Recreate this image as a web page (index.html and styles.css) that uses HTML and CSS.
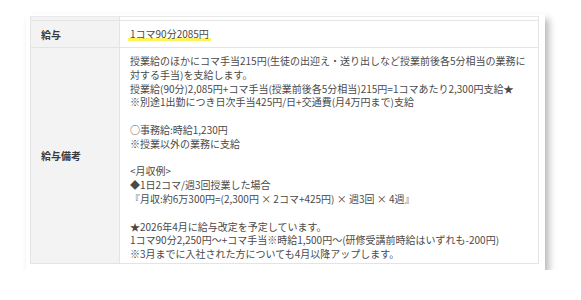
FILE: index.html
```html
<!DOCTYPE html>
<html lang="ja">
<head>
<meta charset="utf-8">
<link rel="stylesheet" href="styles.css">
</head>
<body>
<div class="card">
  <table class="info">
    <tr class="cut">
      <th></th>
      <td></td>
    </tr>
    <tr class="row-salary">
      <th>給与</th>
      <td><span class="marker">1コマ90分2085円</span></td>
    </tr>
    <tr class="row-notes">
      <th>給与備考</th>
      <td>
        <p>授業給のほかにコマ手当215円(生徒の出迎え・送り出しなど授業前後各5分相当の業務に<br>対する手当)を支給します。<br>授業給(90分)2,085円+コマ手当(授業前後各5分相当)215円=1コマあたり2,300円支給★<br>※別途1出勤につき日次手当425円/日+交通費(月4万円まで)支給</p>
        <p>○事務給:時給1,230円<br>※授業以外の業務に支給</p>
        <p>&lt;月収例&gt;<br>◆1日2コマ/週3回授業した場合<br>『月収:約6万300円=(2,300円 × 2コマ+425円) × 週3回 × 4週』</p>
        <p>★2026年4月に給与改定を予定しています。<br>1コマ90分2,250円～+コマ手当※時給1,500円～(研修受講前時給はいずれも-200円)<br>※3月までに入社された方についても4月以降アップします。</p>
      </td>
    </tr>
  </table>
</div>
</body>
</html>
```

FILE: styles.css
```css
html, body {
  margin: 0;
  padding: 0;
  background: #ffffff;
}

body {
  font-family: "Noto Sans CJK JP", "Noto Sans", sans-serif;
  color: #4a4a4a;
}

.card {
  width: 509px;
  margin: 14px 0 0 26px;
  padding: 2px 6px 6px 4px;
  background: #ffffff;
  box-shadow: 4px 5px 7px rgba(0, 0, 0, 0.28);
}

.info {
  width: 509px;
  border-collapse: collapse;
  table-layout: fixed;
}

.info th,
.info td {
  border: 1px solid #e4e4e4;
  padding: 0;
  vertical-align: middle;
  text-align: left;
}

.info th {
  width: 78px;
  padding-left: 10px;
  background: #f3f3f3;
  font-weight: bold;
  font-size: 10px;
  color: #3a3a3a;
}

.info td {
  padding-left: 10px;
  font-size: 10px;
  line-height: 13.8px;
}

.cut th,
.cut td {
  height: 3px;
  border-top-color: #e9e9e9;
}

.row-salary th,
.row-salary td {
  height: 26px;
}

.row-notes td {
  padding-top: 6px;
  padding-bottom: 2px;
}

.row-notes p {
  margin: 0 0 13.8px 0;
}

.row-notes p:last-child {
  margin-bottom: 0;
}

.marker {
  display: inline-block;
  line-height: 12px;
  padding: 0 2px 1px;
  margin-left: -2px;
  background: linear-gradient(transparent 76%, #fff35c 76%);
}
```
